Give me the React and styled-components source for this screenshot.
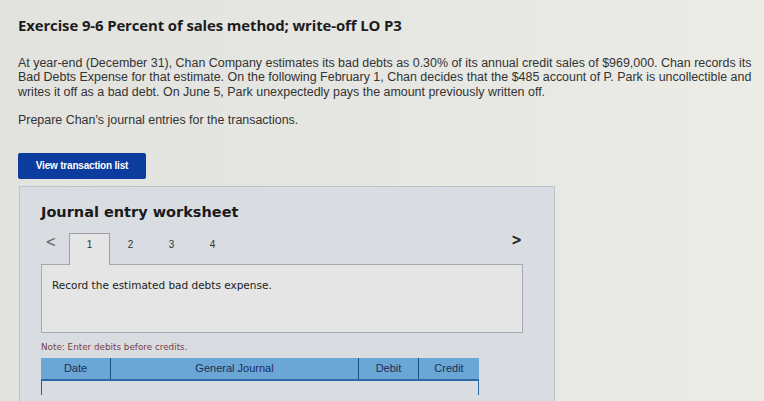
import React from "react";
import styled, { createGlobalStyle } from "styled-components";

const GlobalStyle = createGlobalStyle`
  html, body {
    margin: 0;
    padding: 0;
    width: 764px;
    height: 401px;
    overflow: hidden;
    background: linear-gradient(90deg, #e2e2de 0%, #e6e6e2 50%, #ecece7 100%);
  }
`;

const Page = styled.div`
  height: 401px;
  overflow: hidden;
  padding: 15px 0 0 18px;
  box-sizing: border-box;
  font-family: "Open Sans", "Liberation Sans", sans-serif;
  color: #2a2a2a;
`;

const Title = styled.h1`
  margin: 0;
  font-size: 14.9px;
  line-height: 20px;
  font-weight: 700;
  color: #1c1c1c;
  letter-spacing: -0.1px;
`;

const Paragraph = styled.p`
  margin: ${(p) => p.$top || 0}px 0 0;
  width: 745px;
  font-family: "Liberation Sans", Arial, sans-serif;
  font-size: 12.45px;
  line-height: 14.4px;
  color: #333;
  white-space: nowrap;
`;

const Button = styled.button`
  display: block;
  margin-top: 25px;
  width: 128px;
  height: 26px;
  border: none;
  border-radius: 2px;
  background: #0b3c9e;
  color: #ffffff;
  font-family: "Liberation Sans", Arial, sans-serif;
  font-weight: 700;
  font-size: 10px;
  letter-spacing: -0.2px;
`;

const Panel = styled.section`
  margin-top: 7px;
  margin-left: 1px;
  width: 536px;
  height: 215px;
  box-sizing: border-box;
  border: 1px solid #bcc3cc;
  border-bottom: none;
  background: #d9dde2;
  padding: 15px 0 0 21px;
  font-family: "DejaVu Sans", Verdana, sans-serif;
`;

const PanelTitle = styled.h2`
  margin: 0;
  font-size: 14.5px;
  line-height: 20px;
  font-weight: 700;
  color: #1a1a1a;
`;

const TabRow = styled.div`
  display: flex;
  align-items: flex-end;
  margin-top: 10px;
  height: 32px;
  width: 482px;
`;

const Arrow = styled.span`
  width: 28px;
  padding-left: 2px;
  box-sizing: border-box;
  align-self: flex-start;
  margin-top: 2px;
  color: #666;
  font-size: 16px;
  line-height: 1;
  transform: scaleX(0.8);
`;

const Tab = styled.div`
  width: 41px;
  height: 32px;
  box-sizing: border-box;
  display: flex;
  align-items: flex-start;
  justify-content: center;
  padding-top: 5px;
  font-size: 10px;
  color: #333;
  font-family: "Liberation Sans", Arial, sans-serif;
  border: 1px solid ${(p) => (p.$active ? "#9aa0a6" : "transparent")};
  border-bottom: none;
  background: ${(p) => (p.$active ? "#e4e5e4" : "transparent")};
  position: relative;
  z-index: 1;
  margin-bottom: -1px;
`;

const Spacer = styled.div`
  flex: 1;
`;

const NextArrow = styled.span`
  align-self: flex-start;
  color: #222;
  font-size: 16px;
  line-height: 1;
  font-weight: 700;
  transform: scaleX(0.8);
`;

const Prompt = styled.div`
  width: 482px;
  height: 69px;
  box-sizing: border-box;
  border: 1px solid #a5aaaf;
  background: #e4e5e4;
  padding: 14px 10px;
  font-size: 10.5px;
  color: #222;
`;

const Note = styled.div`
  margin-top: 9px;
  font-size: 8.8px;
  color: #7a3e3e;
`;

const HeaderRow = styled.div`
  display: grid;
  grid-template-columns: 69px 248px 60px 61px;
  width: 438px;
  height: 21px;
  margin-top: 6px;
  background: #6aa6d6;
  border-bottom: 2px solid #2a6aa8;
  font-family: "Liberation Sans", Arial, sans-serif;
  font-size: 11px;
  color: #1d2f55;
`;

const HeaderCell = styled.div`
  display: flex;
  align-items: center;
  justify-content: center;
  border-left: ${(p) => (p.$first ? "none" : "1.5px solid #1f4f86")};
`;

const BodyRow = styled.div`
  width: 438px;
  height: 14px;
  box-sizing: border-box;
  border-left: 1px solid #555;
  border-right: 1px solid #2a6aa8;
`;

export default function App() {
  return (
    <>
      <GlobalStyle />
      <Page>
        <Title>Exercise 9-6 Percent of sales method; write-off LO P3</Title>
        <Paragraph $top={21}>
          At year-end (December 31), Chan Company estimates its bad debts as 0.30% of its annual credit sales of
          $969,000. Chan records its
          <br />
          Bad Debts Expense for that estimate. On the following February 1, Chan decides that the $485 account of
          P. Park is uncollectible and
          <br />
          writes it off as a bad debt. On June 5, Park unexpectedly pays the amount previously written off.
        </Paragraph>
        <Paragraph $top={14}>Prepare Chan's journal entries for the transactions.</Paragraph>
        <Button>View transaction list</Button>
        <Panel>
          <PanelTitle>Journal entry worksheet</PanelTitle>
          <TabRow>
            <Arrow>&lt;</Arrow>
            <Tab $active>1</Tab>
            <Tab>2</Tab>
            <Tab>3</Tab>
            <Tab>4</Tab>
            <Spacer />
            <NextArrow>&gt;</NextArrow>
          </TabRow>
          <Prompt>Record the estimated bad debts expense.</Prompt>
          <Note>Note: Enter debits before credits.</Note>
          <HeaderRow>
            <HeaderCell $first>Date</HeaderCell>
            <HeaderCell>General Journal</HeaderCell>
            <HeaderCell>Debit</HeaderCell>
            <HeaderCell>Credit</HeaderCell>
          </HeaderRow>
          <BodyRow />
        </Panel>
      </Page>
    </>
  );
}
